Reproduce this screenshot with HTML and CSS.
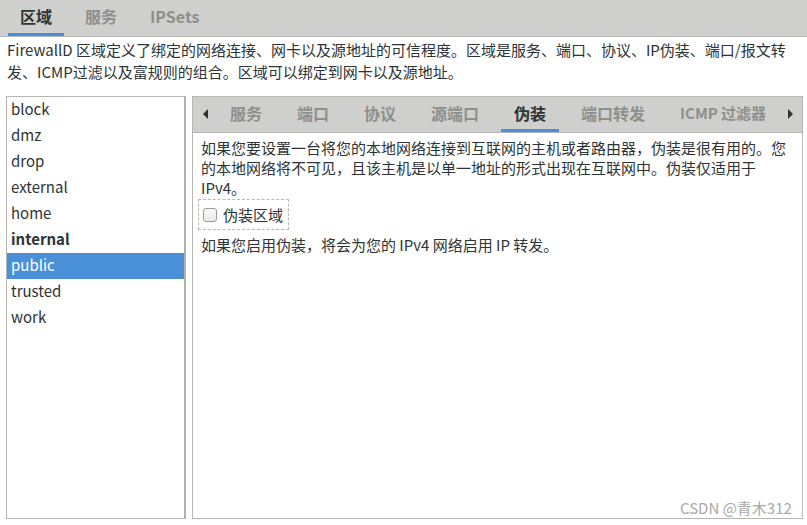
FILE: index.html
```html
<!DOCTYPE html>
<html lang="zh-CN">
<head>
    <meta charset="UTF-8">
    <title>防火墙配置 - 区域</title>
    <link rel="stylesheet" href="styles.css">
</head>
<body>
    <div class="top-tabs">
        <div class="tab active">区域</div>
        <div class="tab">服务</div>
        <div class="tab">IPSets</div>
    </div>

    <p class="intro">FirewallD 区域定义了绑定的网络连接、网卡以及源地址的可信程度。区域是服务、端口、协议、IP伪装、端口/报文转发、ICMP过滤以及富规则的组合。区域可以绑定到网卡以及源地址。</p>

    <div class="main">
        <ul class="zone-list">
            <li>block</li>
            <li>dmz</li>
            <li>drop</li>
            <li>external</li>
            <li>home</li>
            <li class="default">internal</li>
            <li class="selected">public</li>
            <li>trusted</li>
            <li>work</li>
        </ul>

        <div class="panel">
            <div class="sub-tabs">
                <span class="arrow left"></span>
                <div class="sub-tab">服务</div>
                <div class="sub-tab">端口</div>
                <div class="sub-tab">协议</div>
                <div class="sub-tab">源端口</div>
                <div class="sub-tab active">伪装</div>
                <div class="sub-tab">端口转发</div>
                <div class="sub-tab last">ICMP 过滤器</div>
                <span class="arrow right"></span>
            </div>

            <div class="panel-body">
                <p>如果您要设置一台将您的本地网络连接到互联网的主机或者路由器，伪装是很有用的。您的本地网络将不可见，且该主机是以单一地址的形式出现在互联网中。伪装仅适用于 IPv4。</p>
                <label class="check">
                    <span class="box"></span>
                    <span>伪装区域</span>
                </label>
                <p>如果您启用伪装，将会为您的 IPv4 网络启用 IP 转发。</p>
            </div>
        </div>
    </div>

    <div class="watermark">CSDN @青木312</div>
</body>
</html>
```

FILE: styles.css
```css
body {
    margin: 0;
    width: 807px;
    height: 525px;
    overflow: hidden;
    background: #ffffff;
    color: #2e3436;
    font-family: "Noto Sans CJK SC", "Noto Sans", sans-serif;
    position: relative;
}
.top-tabs {
    display: flex;
    gap: 9px;
    height: 36px;
    padding-left: 8px;
    background-color: #cfcfcd;
    border-bottom: 1px solid #b9b9b6;
}
.tab {
    padding: 0 12px;
    line-height: 33px;
    font-size: 16px;
    font-weight: bold;
    color: #8d8f8c;
    border-bottom: 3px solid transparent;
}
.tab.active {
    color: #2e3436;
    border-bottom-color: #4a90d9;
}
.intro {
    margin: 2px 0 0;
    padding: 0 20px 0 7px;
    font-size: 15px;
    line-height: 22px;
}
.main {
    display: flex;
    gap: 6px;
    margin-top: 13px;
    padding: 0 4px 0 6px;
    height: 423px;
}
.zone-list {
    flex: none;
    list-style: none;
    margin: 0;
    padding: 0;
    width: 177px;
    border: 1px solid #b6b6b3;
    border-right: 2px solid #b0b0ad;
    font-size: 15px;
}
.zone-list li {
    height: 26px;
    line-height: 24px;
    padding-left: 4px;
}
.zone-list li.default {
    font-weight: bold;
}
.zone-list li.selected {
    background-color: #4a90d9;
    color: #ffffff;
}
.panel {
    flex: 1;
    min-width: 0;
    border: 1px solid #b6b6b3;
    display: flex;
    flex-direction: column;
}
.sub-tabs {
    display: flex;
    align-items: stretch;
    gap: 9px;
    height: 35px;
    overflow: hidden;
    background-color: #cfcfcd;
    border-bottom: 1px solid #b6b6b3;
}
.sub-tab {
    flex: none;
    padding: 0 13px;
    line-height: 32px;
    font-size: 16px;
    font-weight: bold;
    color: #8d8f8c;
    white-space: nowrap;
    border-bottom: 3px solid transparent;
}
.sub-tab.last {
    padding-right: 0;
    font-size: 15px;
}
.sub-tab.active {
    color: #2e3436;
    border-bottom-color: #4a90d9;
}
.arrow {
    width: 24px;
    flex: none;
    position: relative;
}
.arrow::after {
    content: "";
    position: absolute;
    top: 12px;
    border-top: 5px solid transparent;
    border-bottom: 5px solid transparent;
}
.arrow.left {
    margin-right: -9px;
}
.arrow.left::after {
    left: 10px;
    border-right: 5px solid #2e3436;
}
.arrow.right {
    margin-left: auto;
}
.arrow.right::after {
    left: 10px;
    border-left: 5px solid #2e3436;
}
.panel-body {
    padding: 5px 10px 0 8px;
    font-size: 15px;
    line-height: 20px;
}
.panel-body p {
    margin: 0;
}
.check {
    display: inline-flex;
    align-items: center;
    gap: 6px;
    margin: 1px 0 5px -3px;
    padding: 0 5px 0 4px;
    height: 29px;
    border: 1px dashed #b8b8b5;
}
.check .box {
    width: 12px;
    height: 12px;
    border: 1px solid #9a9c98;
    border-radius: 3px;
    background: linear-gradient(#fbfbfa, #e8e8e6);
}
.watermark {
    position: absolute;
    left: 680px;
    top: 497px;
    font-size: 15px;
    color: #a9a9a9;
}
```
